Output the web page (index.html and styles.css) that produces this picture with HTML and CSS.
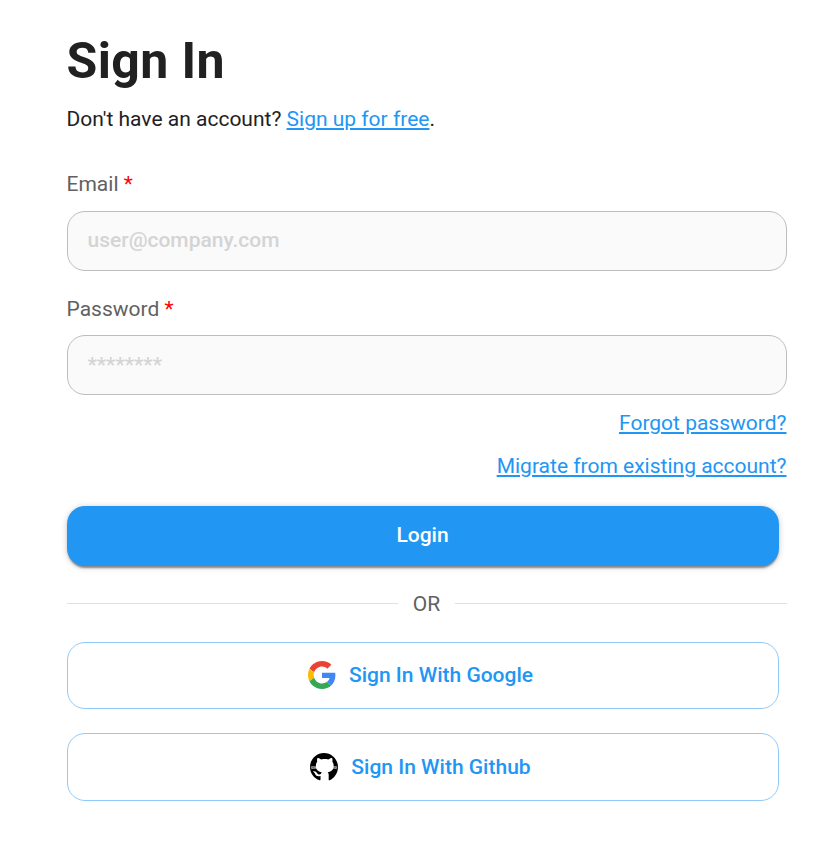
FILE: index.html
```html
<!DOCTYPE html>
<html lang="en">
<head>
<meta charset="utf-8">
<title>Sign In</title>
<link rel="stylesheet" href="styles.css">
</head>
<body>
<main class="signin">
  <h1 class="title">Sign In</h1>
  <p class="signup">Don't have an account? <a class="link" href="#">Sign up for free</a>.</p>
  <form>
    <label class="label" for="email">Email <span class="required">*</span></label>
    <input class="input" id="email" type="email" placeholder="user@company.com">
    <label class="label label-password" for="password">Password <span class="required">*</span></label>
    <input class="input input-password" id="password" type="password" placeholder="********">
    <div class="links">
      <a class="link" href="#">Forgot password?</a>
      <a class="link" href="#">Migrate from existing account?</a>
    </div>
    <button class="button login" type="submit">Login</button>
  </form>
  <div class="divider">OR</div>
  <button class="button social google">
    <svg class="icon" viewBox="0 0 48 48"><path fill="#ea4335" d="M24 9.5c3.54 0 6.71 1.22 9.21 3.6l6.85-6.85C35.9 2.38 30.47 0 24 0 14.62 0 6.51 5.38 2.56 13.22l7.98 6.19C12.43 13.72 17.74 9.5 24 9.5z"/><path fill="#4285f4" d="M46.98 24.55c0-1.57-.15-3.09-.38-4.55H24v9.02h12.94c-.58 2.96-2.26 5.48-4.78 7.18l7.73 6c4.51-4.18 7.09-10.36 7.09-17.65z"/><path fill="#fbbc05" d="M10.53 28.59c-.48-1.45-.76-2.99-.76-4.59s.27-3.14.76-4.59l-7.98-6.19C.92 16.46 0 20.12 0 24c0 3.88.92 7.54 2.56 10.78l7.97-6.19z"/><path fill="#34a853" d="M24 48c6.48 0 11.93-2.13 15.89-5.81l-7.73-6c-2.15 1.45-4.92 2.3-8.16 2.3-6.26 0-11.57-4.22-13.47-9.91l-7.98 6.19C6.51 42.62 14.62 48 24 48z"/></svg>
    Sign In With Google
  </button>
  <button class="button social github">
    <svg class="icon" viewBox="0 0 24 24"><path d="M12 0C5.37 0 0 5.373 0 12c0 5.303 3.438 9.8 8.205 11.385.6.113.82-.258.82-.577v-3.1c-3.338.724-4.3-.9-4.6-1.8-.3-.8-1.1-1.5-1.9-2.1 1.9-.5 2.9.4 3.6 1.5.9 1.3 2.2 1.3 3.2.7.1-.7.4-1.2.8-1.6-3.1-.4-5.1-1.9-5.1-5.7 0-1.31.465-2.38 1.235-3.22-.135-.303-.54-1.523.105-3.176 0 0 1.005-.322 3.3 1.23.96-.267 1.98-.399 3-.405 1.02.006 2.04.138 3 .405 2.28-1.552 3.285-1.23 3.285-1.23.645 1.653.24 2.873.12 3.176.765.84 1.23 1.91 1.23 3.22 0 3.8-2 5.3-5.1 5.7.42.36.81 1.096.81 2.22v4.2c0 .315.21.69.825.57C20.565 21.795 24 17.295 24 12 24 5.373 18.627 0 12 0"/><path fill="none" stroke="#fff" stroke-width=".8" d="M.7 12.1q2.2-.4 5 .1M23.3 12.1q-2.2-.4-5 .1"/><path fill="none" stroke="#fff" stroke-width=".5" d="M1 13.5q2-.6 5-.4M23 13.5q-2-.6-5-.4"/></svg>
    Sign In With Github
  </button>
</main>
</body>
</html>
```

FILE: styles.css
```css
* { box-sizing: border-box; }
body { margin: 0; background: #fff; color: #212121; font: 400 21px/30px Roboto, sans-serif; }
.signin { width: 720px; margin: 31px 0 0 66.5px; }
.title { margin: 0; font-size: 50px; line-height: 60px; font-weight: 700; letter-spacing: .4px; }
.signup { margin: 13px 0 35px; color: #212121; }
.link { color: #2196f3; text-decoration: underline; }
.label { display: block; margin-bottom: 12px; color: #616161; }
.label-password { margin: 23px 0 11px; }
.required { color: #f00; }
.input { display: block; width: 100%; height: 60px; padding: 0 20px 2px; border: 1px solid #bdbdbd; border-radius: 18px; background: #fafafa; font: 500 21px Roboto, sans-serif; outline: 0; }
.input-password { padding-bottom: 0; }
.input::placeholder { color: #d4d4d4; opacity: 1; }
.links { display: flex; flex-direction: column; align-items: flex-end; gap: 13px; margin: 13px 0 25px; }
.button { display: flex; align-items: center; justify-content: center; width: 712px; border-radius: 18px; font: 500 21px Roboto, sans-serif; }
.login { height: 60px; padding: 0 0 2px; border: 0; background: #2196f3; color: #fff; box-shadow: 0 3px 2px -1px rgba(0, 0, 0, .4), 0 1px 6px rgba(0, 0, 0, .22); }
.divider { display: flex; align-items: center; gap: 15px; height: 30px; margin: 23px 0; color: #616161; }
.divider::before, .divider::after { content: ""; flex: 1; height: 1px; margin-bottom: 2px; background: #e0e0e0; }
.social { height: 67px; padding: 0 4px 2px 0; gap: 13px; border: 1px solid #90caf9; background: #fff; color: #2196f3; }
.github { height: 68px; margin-top: 24px; padding-bottom: 1px; }
.icon { width: 28px; height: 28px; }
```
